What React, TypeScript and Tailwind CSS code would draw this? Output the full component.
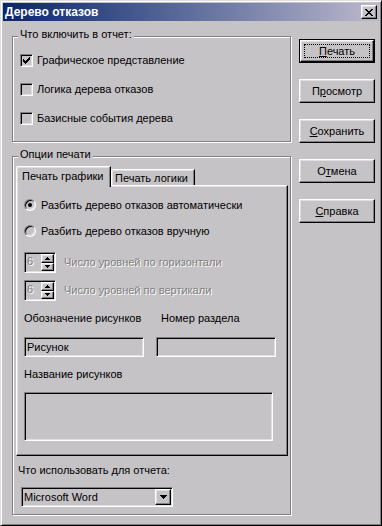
import React from 'react';

const raised =
  "border border-t-white border-l-white border-r-black border-b-black shadow-[inset_-1px_-1px_0_#808080,inset_1px_1px_0_#dfdfdf]";
const sunken =
  "border border-t-[#808080] border-l-[#808080] border-r-white border-b-white shadow-[inset_1px_1px_0_#000,inset_-1px_-1px_0_#dfdfdf]";
const etched = "border border-[#808080] shadow-[inset_1px_1px_0_#fff,1px_1px_0_#fff]";
const disabledText = "text-[#808080] [text-shadow:1px_1px_0_#fff]";

// pixel glyph: rows of [y, x, length]
function Pixels({ rows, w, h }: { rows: [number, number, number][]; w: number; h: number }) {
  return (
    <svg width={w} height={h} viewBox={`0 0 ${w} ${h}`} shapeRendering="crispEdges" className="block">
      {rows.map(([y, x, len], i) => (
        <rect key={i} x={x} y={y} width={len} height={1} fill="currentColor" />
      ))}
    </svg>
  );
}

const checkRows: [number, number, number][] = [
  [0, 6, 1], [1, 5, 2], [2, 0, 1], [2, 4, 3], [3, 0, 2], [3, 3, 3], [4, 0, 5], [5, 1, 3], [6, 2, 1],
];
const closeRows: [number, number, number][] = [
  [0, 0, 2], [0, 6, 2], [1, 1, 2], [1, 5, 2], [2, 2, 4], [3, 3, 2], [4, 2, 4], [5, 1, 2], [5, 5, 2], [6, 0, 2], [6, 6, 2],
];
const upRows: [number, number, number][] = [[0, 2, 1], [1, 1, 3], [2, 0, 5]];
const downRows: [number, number, number][] = [[0, 0, 5], [1, 1, 3], [2, 2, 1]];
const dropRows: [number, number, number][] = [[0, 0, 7], [1, 1, 5], [2, 2, 3], [3, 3, 1]];

function Checkbox({ checked, label }: { checked?: boolean; label: string }) {
  return (
    <div className="flex items-center gap-[4px] h-[13px]">
      <div className={`${sunken} w-[13px] h-[13px] flex items-center justify-center`}>
        {checked && <Pixels rows={checkRows} w={7} h={7} />}
      </div>
      <span>{label}</span>
    </div>
  );
}

function Radio({ checked, label }: { checked?: boolean; label: string }) {
  return (
    <div className="flex items-center gap-[5px] h-[12px]">
      <div className="w-[12px] h-[12px] rounded-full border border-t-[#808080] border-l-[#808080] border-r-white border-b-white shadow-[inset_1px_1px_0_#000,inset_-1px_-1px_0_#dfdfdf] flex items-center justify-center">
        {checked && <div className="w-[4px] h-[4px] rounded-full bg-black" />}
      </div>
      <span>{label}</span>
    </div>
  );
}

function Spin({ label }: { label: string }) {
  return (
    <div className="flex items-center gap-[8px] h-[21px]">
      <div className={`${sunken} w-[32px] h-[21px] flex`}>
        <div className={`flex-1 pl-[2px] pt-[2px] ${disabledText}`}>6</div>
        <div className="w-[14px] flex flex-col py-[1px] pr-[1px]">
          <div className={`${raised} flex-1 flex items-center justify-center`}>
            <Pixels rows={upRows} w={5} h={3} />
          </div>
          <div className={`${raised} flex-1 flex items-center justify-center`}>
            <Pixels rows={downRows} w={5} h={3} />
          </div>
        </div>
      </div>
      <span className={disabledText}>{label}</span>
    </div>
  );
}

function Btn({ children, isDefault }: { children: React.ReactNode; isDefault?: boolean }) {
  if (isDefault) {
    return (
      <div className="border border-black h-[24px]">
        <div className={`${raised} h-full p-[3px]`}>
          <div className="h-full border border-dotted border-black flex items-center justify-center">{children}</div>
        </div>
      </div>
    );
  }
  return <div className={`${raised} h-[24px] flex items-center justify-center`}>{children}</div>;
}

export default function App() {
  return (
    <div className="w-[382px] h-[526px] bg-[#c6c3c6] border border-t-[#dfdfdf] border-l-[#dfdfdf] border-r-black border-b-black shadow-[inset_1px_1px_0_#fff,inset_-1px_-1px_0_#808080] p-[2px] font-['Liberation_Sans',Arial,sans-serif] text-[11px] leading-[13px] text-black select-none flex flex-col">
      {/* title bar */}
      <div className="h-[18px] shrink-0 flex items-center justify-between pl-[2px] pr-[2px] bg-linear-to-r from-[#0a246a] to-[#bdb9cc]">
        <span className="text-white font-bold text-[12px]">Дерево отказов</span>
        <div className={`${raised} bg-[#c6c3c6] w-[16px] h-[14px] flex items-center justify-center`}>
          <Pixels rows={closeRows} w={8} h={7} />
        </div>
      </div>

      <div className="flex pl-[9px]">
        {/* left column */}
        <div className="w-[279px] flex flex-col">
          <fieldset className={`mt-[7px] ${etched}`}>
            <legend className="ml-[5px] px-[2px] pb-[3px] leading-[13px] bg-[#c6c3c6]">Что включить в отчет:</legend>
            <div className="pt-[10px] pb-[16px] pl-[7px] flex flex-col gap-[16px]">
              <Checkbox checked label="Графическое представление" />
              <Checkbox label="Логика дерева отказов" />
              <Checkbox label="Базисные события дерева" />
            </div>
          </fieldset>

          <fieldset className={`mt-[6px] ${etched}`}>
            <legend className="ml-[5px] px-[2px] pb-[3px] leading-[13px] bg-[#c6c3c6]">Опции печати</legend>
            <div className="pt-[2px] pl-[3px] pr-[2px] pb-[7px] flex flex-col">
              {/* tabs */}
              <div className="flex items-end h-[19px]">
                <div className="relative z-10 -mb-[2px] w-[95px] h-[21px] bg-[#c6c3c6] border-l border-t border-r border-t-white border-l-white border-r-black rounded-tl-[2px] shadow-[inset_-1px_0_0_#808080,inset_1px_1px_0_#dfdfdf] pl-[5px] pt-[3px]">
                  Печать графики
                </div>
                <div className="w-[84px] h-[16px] border-l border-t border-r border-t-white border-l-white border-r-black rounded-tl-[2px] shadow-[inset_-1px_0_0_#808080,inset_1px_1px_0_#dfdfdf] pl-[3px] pt-[2px]">
                  Печать логики
                </div>
              </div>
              {/* tab panel */}
              <div className={`${raised} pl-[7px] pt-[13px] pb-[14px] flex flex-col`}>
                <Radio checked label="Разбить дерево отказов автоматически" />
                <div className="mt-[14px]">
                  <Radio label="Разбить дерево отказов вручную" />
                </div>
                <div className="mt-[15px]">
                  <Spin label="Число уровней по горизонтали" />
                </div>
                <div className="mt-[7px]">
                  <Spin label="Число уровней по вертикали" />
                </div>
                <div className="mt-[11px] flex h-[13px]">
                  <span className="w-[137px]">Обозначение рисунков</span>
                  <span>Номер раздела</span>
                </div>
                <div className="mt-[12px] flex gap-[12px]">
                  <div className={`${sunken} w-[120px] h-[20px] pl-[2px] pt-[3px]`}>Рисунок</div>
                  <div className={`${sunken} w-[120px] h-[20px]`} />
                </div>
                <div className="mt-[11px] h-[13px]">Название рисунков</div>
                <div className={`${sunken} mt-[11px] w-[249px] h-[49px]`} />
              </div>
              <div className="mt-[8px] pl-[2px] h-[13px]">Что использовать для отчета:</div>
              <div className={`${sunken} mt-[10px] ml-[5px] w-[152px] h-[20px] flex`}>
                <div className="flex-1 pl-[2px] pt-[3px]">Microsoft Word</div>
                <div className={`${raised} w-[16px] h-[16px] mt-[1px] mr-[1px] flex items-center justify-center`}>
                  <Pixels rows={dropRows} w={7} h={4} />
                </div>
              </div>
            </div>
          </fieldset>
        </div>

        {/* buttons */}
        <div className="ml-[8px] mt-[18px] w-[76px] flex flex-col gap-[16px]">
          <Btn isDefault>
            <span><span className="underline">П</span>ечать</span>
          </Btn>
          <Btn>
            <span>П<span className="underline">р</span>осмотр</span>
          </Btn>
          <Btn>
            <span><span className="underline">С</span>охранить</span>
          </Btn>
          <Btn>
            <span>О<span className="underline">т</span>мена</span>
          </Btn>
          <Btn>
            <span><span className="underline">С</span>правка</span>
          </Btn>
        </div>
      </div>
    </div>
  );
}
